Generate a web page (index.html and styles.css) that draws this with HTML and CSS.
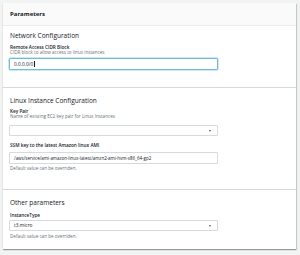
FILE: index.html
```html
<!DOCTYPE HTML>
<html lang="en">
<head>
  <meta name="viewport" content="width=device-width, initial-scale=1">
  <title>Parameters</title>
  <link rel="stylesheet" href="styles.css">
</head>
<body>
  <div class="card">
    <div class="card-header">Parameters</div>

    <div class="section first">
      <h3>Network Configuration</h3>
      <div class="label">Remote Access CIDR Block</div>
      <div class="desc">CIDR block to allow access to linux instances</div>
      <div class="field focused">0.0.0.0/0<span class="cursor"></span></div>
    </div>

    <div class="section second">
      <h3>Linux Instance Configuration</h3>
      <div class="label">Key Pair</div>
      <div class="desc">Name of existing EC2 key pair for Linux Instances</div>
      <div class="field select keypair"><span class="caret"></span></div>

      <div class="label ssm">SSM key to the latest Amazon linux AMI</div>
      <div class="field ssm-field">/aws/service/ami-amazon-linux-latest/amzn2-ami-hvm-x86_64-gp2</div>
      <div class="desc hint">Default value can be overriden.</div>
    </div>

    <div class="section third">
      <h3>Other parameters</h3>
      <div class="label">InstanceType</div>
      <div class="field select instance">t3.micro<span class="caret"></span></div>
      <div class="desc hint">Default value can be overriden.</div>
    </div>
  </div>
</body>
</html>
```

FILE: styles.css
```css
/* Page */
body {
  margin: 0;
  padding: 3px 3px 0 3px;
  background-color: #f2f3f3;
  font-family: 'Open Sans', 'Noto Sans', sans-serif;
  color: #16191f;
  height: 255px;
  box-sizing: border-box;
  overflow: hidden;
}

.card {
  background-color: #ffffff;
  box-shadow: 0 1px 1px rgba(0, 28, 36, 0.3), 1px 1px 1px rgba(0, 28, 36, 0.15);
  width: 293px;
}

.card-header {
  background-color: #fafafa;
  border-bottom: 1px solid #eaeded;
  height: 22px;
  line-height: 22px;
  padding-left: 7px;
  font-size: 6px;
  font-weight: bold;
}

/* Sections */
.section {
  padding: 8px 7px 18px 7px;
  border-bottom: 1px solid #d5dbdb;
}

.section.first {
  padding-top: 4.5px;
  padding-bottom: 16.5px;
}

.section.third {
  border-bottom: none;
  padding-top: 7.5px;
  padding-bottom: 10.5px;
}

h3 {
  margin: 0 0 5.5px 0;
  font-size: 6.5px;
  line-height: 9px;
  font-weight: normal;
}

.second h3 { margin-bottom: 4.5px; }
.third h3 { margin-bottom: 6px; }

.label {
  font-size: 4.7px;
  line-height: 5px;
  font-weight: 600;
}

.desc {
  font-size: 4.6px;
  line-height: 5px;
  color: #687078;
}

.desc.hint { margin-top: 2.5px; }

/* Inputs */
.field {
  position: relative;
  box-sizing: border-box;
  width: 209px;
  height: 12px;
  line-height: 10px;
  margin-top: 3px;
  margin-left: -1px;
  padding-left: 4px;
  border: 1px solid #d5dbdb;
  border-radius: 1px;
  font-size: 4.8px;
  white-space: nowrap;
  overflow: hidden;
}

.field.focused {
  border-color: #6cbcdb;
  box-shadow: 0 0 0 0.5px #9fd3e8;
}

.cursor {
  display: inline-block;
  width: 0.6px;
  height: 6px;
  margin-left: 0.5px;
  background-color: #16191f;
  vertical-align: -1px;
}

.field.keypair { height: 11px; margin-top: 5.5px; }
.label.ssm { margin-top: 7.5px; }
.field.ssm-field { margin-top: 3.5px; font-size: 4.45px; }
.field.instance { height: 11px; margin-top: 2.5px; line-height: 9px; }

.caret {
  position: absolute;
  right: 6px;
  top: 4px;
  width: 0;
  height: 0;
  border-left: 1.5px solid transparent;
  border-right: 1.5px solid transparent;
  border-top: 2px solid #545b64;
}
```
